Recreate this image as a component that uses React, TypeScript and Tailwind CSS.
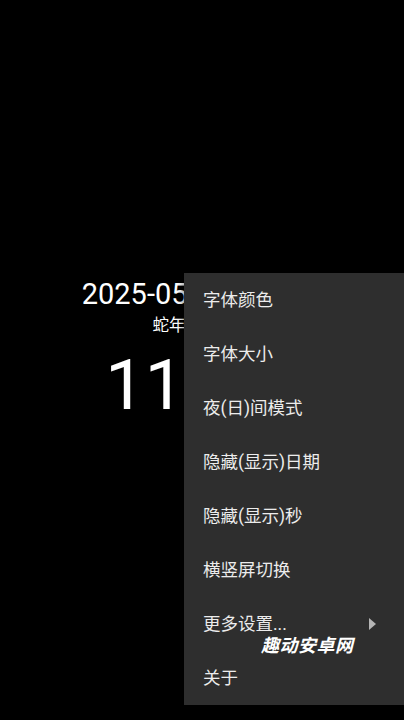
import React from "react";

const menuItems = [
  "字体颜色",
  "字体大小",
  "夜(日)间模式",
  "隐藏(显示)日期",
  "隐藏(显示)秒",
  "横竖屏切换",
  "更多设置...",
  "关于",
];

const font = "font-['Roboto','Noto_Sans_CJK_SC',sans-serif]";

export default function App() {
  return (
    <div className={`relative w-[404px] h-[720px] bg-black overflow-hidden text-white ${font}`}>
      {/* clock face */}
      <div className="flex flex-col items-center pt-[274px]">
        <div className="text-[29px] leading-[40px] whitespace-nowrap">2025-05-20 星期二</div>
        <div className="text-[16.5px] leading-[22px] mt-[1px] whitespace-nowrap">蛇年四月廿三</div>
        <div className="flex items-baseline mt-[7px] whitespace-nowrap">
          <span className="text-[70px] leading-[82px] font-normal">11:28</span>
          <span className="text-[16px] ml-[1px]">36</span>
        </div>
      </div>

      {/* popup menu */}
      <div className="absolute left-[184px] top-[273px] right-0 h-[432px] bg-[#2e2e2e] shadow-[0_2px_8px_rgba(0,0,0,0.6)] flex flex-col">
        {menuItems.map((label, i) => (
          <div
            key={label}
            className="h-[54px] flex items-center justify-between pl-[19px] pr-[28px] text-[17.5px] text-[#ececec]"
          >
            <span>{label}</span>
            {i === 6 && (
              <svg width="7" height="12" viewBox="0 0 7 12" className="text-[#b5b5b5]">
                <path d="M0 0 L7 6 L0 12 Z" fill="currentColor" />
              </svg>
            )}
          </div>
        ))}
      </div>

      {/* watermark */}
      <div className="absolute left-[261px] top-[634px] text-[18px] leading-[24px] font-bold italic text-white tracking-[0.5px]">
        趣动安卓网
      </div>
    </div>
  );
}
